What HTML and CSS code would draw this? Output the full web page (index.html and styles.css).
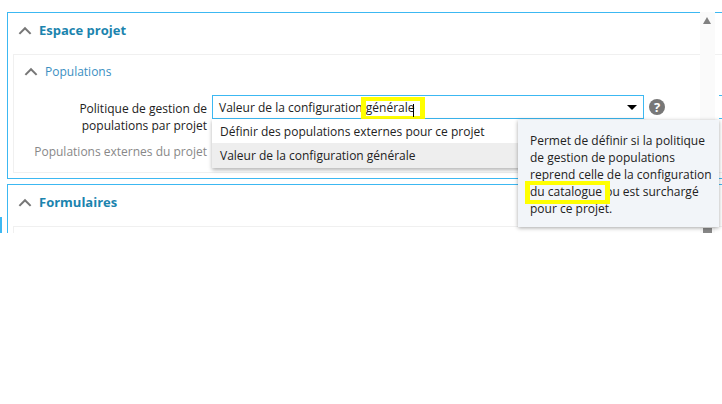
FILE: index.html
```html
<!DOCTYPE html>
<html lang="fr">

<head>
	<meta charset="UTF-8">
	<title>Espace projet</title>
	<link rel="stylesheet" href="styles.css">
</head>

<body>
	<div class="view">
		<div class="side-tab"></div>

		<section class="panel">
			<h2 class="panel-title">
				<svg class="chevron" viewBox="0 0 12 8"><path d="M1 7l5-5 5 5" /></svg>
				Espace projet
			</h2>
			<div class="sub-panel">
				<h3 class="sub-title">
					<svg class="chevron" viewBox="0 0 12 8"><path d="M1 7l5-5 5 5" /></svg>
					Populations
				</h3>
				<div class="field">
					<label class="field-label">Politique de gestion de populations par projet</label>
					<div class="select">
						<span class="select-value">Valeur de la configuration générale</span>
						<span class="select-arrow"></span>
						<span class="mark mark-value"></span>
						<span class="caret"></span>
						<ul class="options">
							<li>Définir des populations externes pour ce projet</li>
							<li class="active">Valeur de la configuration générale</li>
						</ul>
					</div>
					<span class="help">?</span>
				</div>
				<div class="field field-disabled">
					<label class="field-label">Populations externes du projet</label>
				</div>
			</div>
		</section>

		<section class="panel">
			<h2 class="panel-title">
				<svg class="chevron" viewBox="0 0 12 8"><path d="M1 7l5-5 5 5" /></svg>
				Formulaires
			</h2>
			<div class="sub-panel"></div>
		</section>

		<div class="scrollbar">
			<span class="scroll-up"></span>
			<span class="scroll-thumb"></span>
		</div>

		<div class="tooltip">
			Permet de définir si la politique de gestion de populations reprend celle de la configuration du catalogue ou est surchargé pour ce projet.
			<span class="mark mark-tip"></span>
		</div>

		<div class="edge-line"></div>
	</div>
</body>

</html>
```

FILE: styles.css
```css
* {
	box-sizing: border-box;
}

body {
	margin: 0;
	background: #fff;
	font-family: 'Open Sans', sans-serif;
	font-size: 12px;
	line-height: 17px;
	color: #222;
}

.view {
	position: relative;
	height: 233px;
	padding: 12px 0 0 7px;
	overflow: hidden;
}

.side-tab {
	position: absolute;
	left: 0;
	bottom: 0;
	width: 2px;
	height: 16px;
	background: #3cb8f2;
}

/* panneaux */
.panel {
	width: 780px;
	margin-bottom: 5px;
	border: 1px solid #3cb8f2;
}

.panel-title {
	display: flex;
	align-items: center;
	height: 41px;
	margin: 0;
	padding: 0 0 7px 10px;
	font-size: 13px;
	font-weight: 700;
	color: #1b84ae;
}

.chevron {
	width: 14px;
	height: 9px;
	margin-right: 7px;
	fill: none;
	stroke: #777;
	stroke-width: 1.8;
}

.sub-panel {
	margin: 0 5px 5px;
	padding-bottom: 12px;
	border: 1px solid #f0f0f0;
}

.sub-title {
	display: flex;
	align-items: center;
	height: 34px;
	margin: 0;
	padding: 0 0 2px 10px;
	font-size: 12px;
	font-weight: 400;
	color: #3b8fc2;
}

/* formulaire */
.field {
	display: flex;
	align-items: flex-start;
	margin-top: 6px;
}

.field-label {
	width: 193px;
	padding-top: 5px;
	text-align: right;
}

.field-disabled {
	margin-top: 4px;
	color: #888;
}

.select {
	position: relative;
	width: 432px;
	height: 24px;
	margin-left: 5px;
	padding: 3px 6px;
	border: 1px solid #3cb8f2;
}

.select-value {
	color: #222;
}

.select-arrow {
	position: absolute;
	top: 9px;
	right: 6px;
	border-style: solid;
	border-width: 5px 5px 0;
	border-color: #000 transparent transparent;
}

.help {
	width: 16px;
	height: 16px;
	margin: 4px 0 0 5px;
	border-radius: 50%;
	background: #777;
	color: #fff;
	font-size: 13px;
	font-weight: 700;
	line-height: 16px;
	text-align: center;
}

.options {
	position: absolute;
	top: 23px;
	left: -1px;
	width: 432px;
	margin: 0;
	padding: 0;
	list-style: none;
	background: #fff;
	box-shadow: 0 2px 4px rgba(0, 0, 0, 0.3);
}

.options li {
	height: 24px;
	padding: 4px 8px 0;
}

.options .active {
	height: 25px;
	background: #eee;
}

/* annotations jaunes */
.mark {
	position: absolute;
	border: 4px solid #ff0;
	border-width: 4px 5px;
}

.mark-value {
	top: 1px;
	left: 148px;
	width: 64px;
	height: 23px;
}

.caret {
	position: absolute;
	top: 8px;
	left: 200px;
	width: 1px;
	height: 13px;
	background: #000;
}

.mark-tip {
	top: 61px;
	left: 7px;
	width: 85px;
	height: 23px;
}

/* ascenseur */
.scrollbar {
	position: absolute;
	top: 12px;
	left: 700px;
	bottom: 0;
	width: 15px;
	background: #fafafa;
}

.scroll-up {
	position: absolute;
	top: 5px;
	left: 3px;
	border-style: solid;
	border-width: 0 4.5px 7px;
	border-color: transparent transparent #808080;
}

.scroll-thumb {
	position: absolute;
	left: 3px;
	bottom: 0;
	width: 9px;
	height: 5px;
	background: #888;
}

/* info-bulle */
.tooltip {
	position: absolute;
	top: 120px;
	left: 518px;
	width: 201px;
	height: 107px;
	padding: 12px 5px 0 12px;
	background: #f2f5f9;
	box-shadow: 0 1px 4px rgba(0, 0, 0, 0.35);
	color: #222;
}

.edge-line {
	position: absolute;
	top: 95px;
	left: 719px;
	width: 3px;
	height: 24px;
	border-top: 1px solid #3cb8f2;
	border-bottom: 1px solid #3cb8f2;
}
```
